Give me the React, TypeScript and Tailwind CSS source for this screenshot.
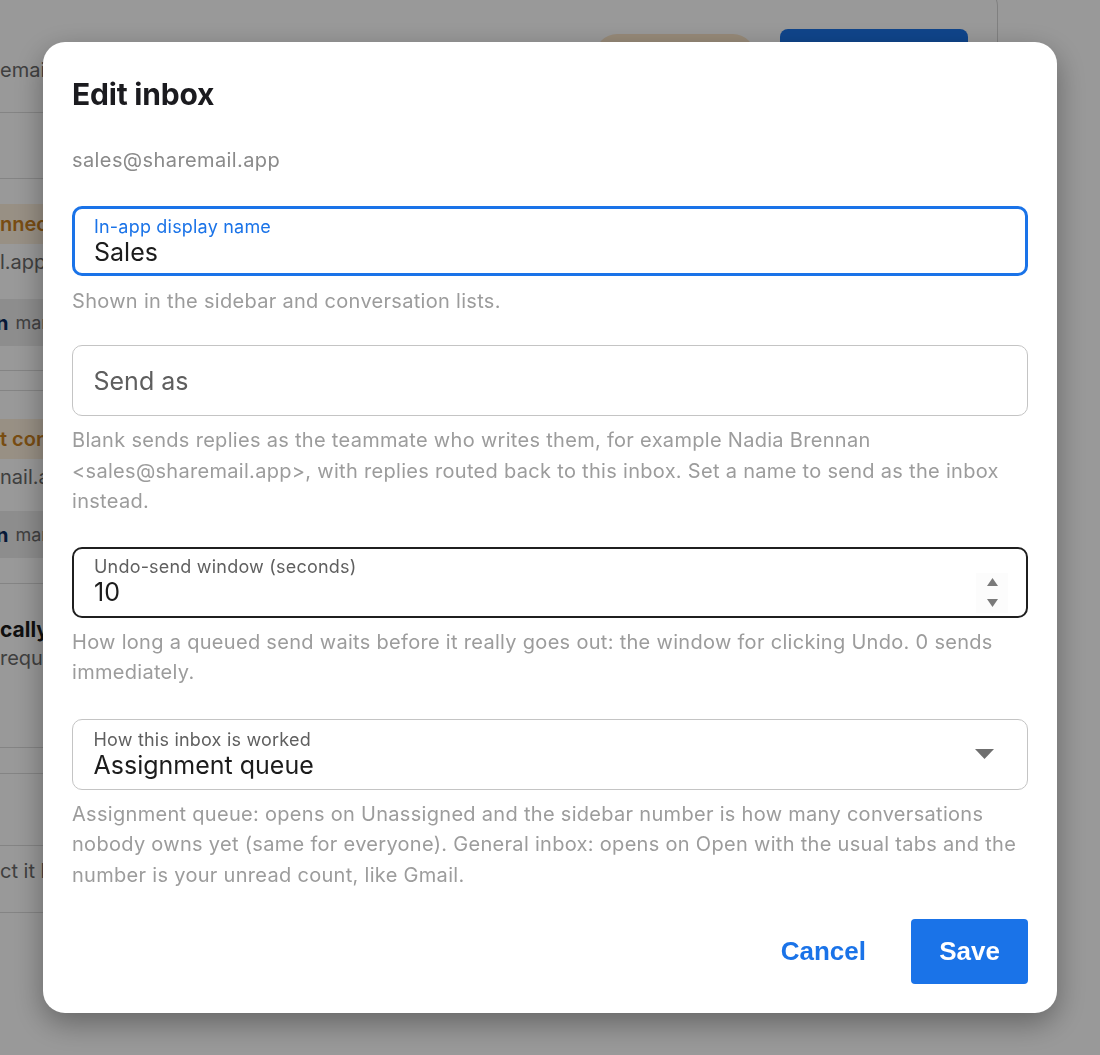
import React from "react";

const sans = "font-['Inter','Noto_Sans',sans-serif]";

function BgLeftText({ children, className = "" }: { children: React.ReactNode; className?: string }) {
  return <div className={`whitespace-nowrap overflow-hidden ${className}`}>{children}</div>;
}

function Chip() {
  return (
    <div className="flex items-center h-[47px] bg-[#ececec] whitespace-nowrap overflow-hidden">
      <span className="-ml-[4px] text-[20px] font-bold text-[#0b2a5c]">n</span>
      <span className="ml-[7px] text-[18px] text-[#6b6b6b]">marketing</span>
    </div>
  );
}

function Background() {
  return (
    <div className={`h-[1055px] w-full bg-white overflow-hidden ${sans}`}>
      <div className="-mt-[12px] w-[998px] h-[1010px] rounded-tr-[18px] border border-l-0 border-b-0 border-[#d6d6d6]">
        <div className="flex items-start h-[124px] border-b border-[#dcdcdc]">
          <BgLeftText className="pt-[66px] w-[200px] text-[20px] text-[#6a6a6a]">email address</BgLeftText>
          <div className="flex-1" />
          <div className="mt-[45px] w-[160px] h-[44px] rounded-full bg-[#fbe6c9]" />
          <div className="ml-[25px] mr-[29px] mt-[40px] w-[188px] h-[48px] rounded-[8px] bg-[#1a73e8]" />
        </div>
        <div className="h-[66px] border-b border-[#dcdcdc]" />
        <div className="h-[192px] border-b border-[#dcdcdc] pt-[25px] w-[200px]">
          <BgLeftText className="h-[40px] flex items-center bg-[#fdf0dd] text-[20px] font-semibold text-[#c9801f]">nnected</BgLeftText>
          <BgLeftText className="h-[35px] flex items-center text-[20px] text-[#6a6a6a]">l.app</BgLeftText>
          <div className="mt-[20px]"><Chip /></div>
        </div>
        <div className="h-[20px] border-b border-[#dcdcdc]" />
        <div className="h-[193px] border-b border-[#dcdcdc] pt-[28px] w-[200px]">
          <BgLeftText className="h-[40px] flex items-center bg-[#fdf0dd] text-[20px] font-semibold text-[#c9801f]">t connected</BgLeftText>
          <BgLeftText className="h-[35px] flex items-center text-[20px] text-[#6a6a6a]">nail.app</BgLeftText>
          <div className="mt-[17px]"><Chip /></div>
        </div>
        <div className="h-[164px] border-b border-[#dcdcdc] pt-[32px]">
          <BgLeftText className="text-[21px] font-bold text-[#1a1a1a] leading-[28px]">cally</BgLeftText>
          <BgLeftText className="text-[20px] text-[#6a6a6a] leading-[28px]">required</BgLeftText>
        </div>
        <div className="h-[26px] border-b border-[#dcdcdc]" />
        <div className="h-[72px] border-b border-[#dcdcdc]" />
        <div className="h-[67px] border-b border-[#dcdcdc] pt-[10px]">
          <BgLeftText className="text-[20px] text-[#6a6a6a]">ct it by</BgLeftText>
        </div>
      </div>
    </div>
  );
}

function Helper({ children, className = "" }: { children: React.ReactNode; className?: string }) {
  return <p className={`text-[20px] tracking-[0.3px] leading-[30.5px] text-[#9c9c9c] ${className}`}>{children}</p>;
}

function UpDown() {
  return (
    <div className="mt-[24px] flex flex-col items-center justify-center gap-[13px] w-[32px] h-[40px] bg-[#fcfcfc]">
      <svg width="11" height="8" viewBox="0 0 11 8"><path d="M5.5 0 L11 8 L0 8 Z" fill="#7a7a7a" /></svg>
      <svg width="11" height="8" viewBox="0 0 11 8"><path d="M0 0 L11 0 L5.5 8 Z" fill="#7a7a7a" /></svg>
    </div>
  );
}

function Caret() {
  return (
    <svg width="19" height="10" viewBox="0 0 19 10"><path d="M0 0 L19 0 L9.5 10 Z" fill="#6f6f6f" /></svg>
  );
}

const labelCls = "text-[18px] tracking-[0.2px] leading-[20px]";
const valueCls = "text-[25px] leading-[30px] text-[#1c1c1c]";

export default function App() {
  return (
    <div className="relative h-[1055px] w-full overflow-hidden">
      <Background />
      <div className="fixed inset-0 bg-black/40 flex items-center justify-center">
        <div className={`w-[1014px] rounded-[22px] bg-white shadow-[0_10px_30px_rgba(0,0,0,0.35)] px-[29px] pt-[34px] pb-[29px] ${sans}`}>
          <h2 className="text-[30px] leading-[36px] font-bold text-[#1b1b1f] tracking-[-0.2px]">Edit inbox</h2>
          <div className="mt-[33px] text-[20px] tracking-[0.4px] leading-[30px] text-[#8a8a8a]">sales@sharemail.app</div>

          <div className="mt-[31px] h-[70px] rounded-[10px] border-[3px] border-[#1a73e8] px-[19px] pt-[8px]">
            <div className={`${labelCls} text-[#1a73e8]`}>In-app display name</div>
            <div className={valueCls}>Sales</div>
          </div>
          <Helper className="mt-[10px]">Shown in the sidebar and conversation lists.</Helper>

          <div className="mt-[29px] h-[71px] rounded-[10px] border-[1.5px] border-[#c4c4c4] px-[20.5px] flex items-center">
            <div className="text-[25px] leading-[30px] text-[#5e5e5e]">Send as</div>
          </div>
          <Helper className="mt-[9px]">
            Blank sends replies as the teammate who writes them, for example Nadia Brennan &lt;sales@sharemail.app&gt;, with replies routed back to this inbox. Set a name to send as the inbox instead.
          </Helper>

          <div className="mt-[30px] h-[71px] rounded-[10px] border-[2px] border-[#1f1f1f] pl-[20px] pr-[18px] flex items-start">
            <div className="flex-1 pt-[8px]">
              <div className={`${labelCls} text-[#5f5f5f]`}>Undo-send window (seconds)</div>
              <div className={valueCls}>10</div>
            </div>
            <UpDown />
          </div>
          <Helper className="mt-[9px]">
            How long a queued send waits before it really goes out: the window for clicking Undo. 0 sends immediately.
          </Helper>

          <div className="mt-[31px] h-[71px] rounded-[10px] border-[1.5px] border-[#c4c4c4] pl-[20.5px] pr-[33px] flex items-center">
            <div className="flex-1 mt-[1px]">
              <div className={`${labelCls} text-[#5f5f5f]`}>How this inbox is worked</div>
              <div className={valueCls}>Assignment queue</div>
            </div>
            <Caret />
          </div>
          <Helper className="mt-[9px]">
            Assignment queue: opens on Unassigned and the sidebar number is how many conversations nobody owns yet (same for everyone). General inbox: opens on Open with the usual tabs and the number is your unread count, like Gmail.
          </Helper>

          <div className="mt-[29px] flex justify-end items-center gap-[26px]">
            <button className="h-[65px] px-[19px] rounded-[4px] font-['Liberation_Sans','Arial',sans-serif] text-[26px] font-bold text-[#1a73e8]">Cancel</button>
            <button className="h-[65px] w-[117px] rounded-[4px] bg-[#1a73e8] font-['Liberation_Sans','Arial',sans-serif] text-[26px] font-bold text-white">Save</button>
          </div>
        </div>
      </div>
    </div>
  );
}
